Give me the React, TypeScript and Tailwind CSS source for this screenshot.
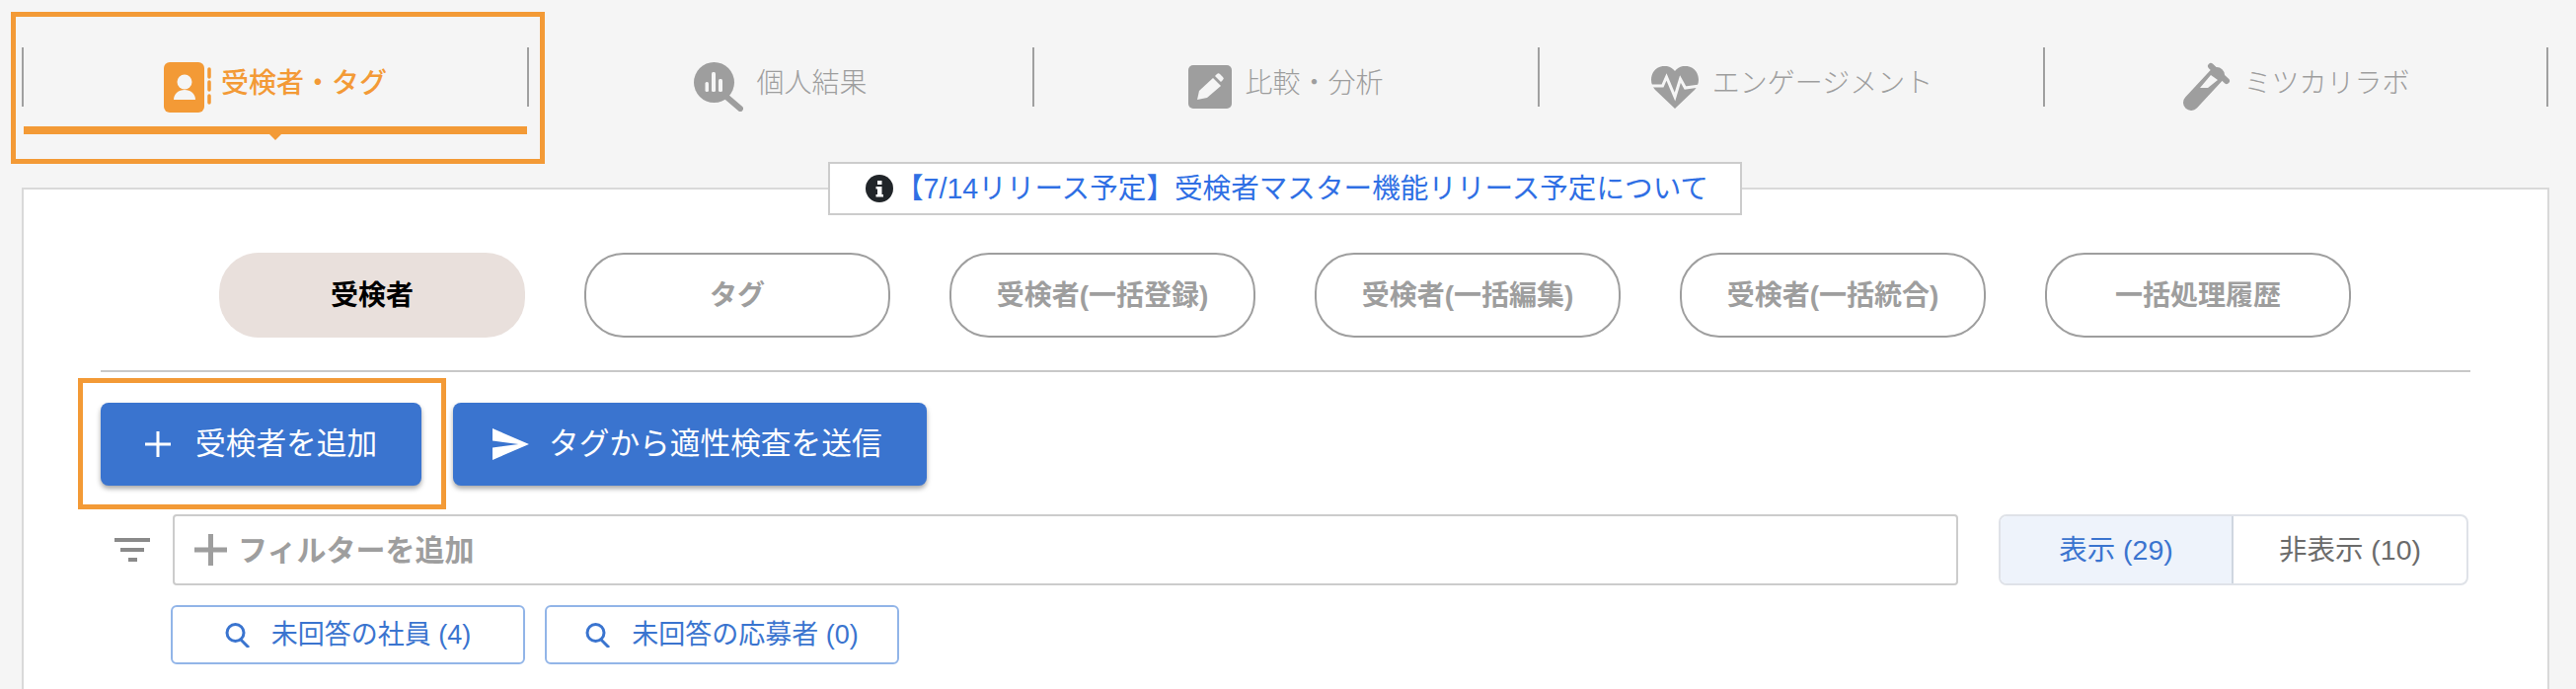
const ActiveIcon = () => (
  <svg width="48" height="51" viewBox="0 0 48 51" className="shrink-0">
    <rect x="0" y="0" width="41" height="51" rx="6" fill="#f39a36" />
    <circle cx="21" cy="20" r="7.5" fill="#f5f5f5" />
    <path d="M10 38c0-6 5-10 11-10s11 4 11 10z" fill="#f5f5f5" />
    <path d="M46 7v8M46 20v8M46 34v7" stroke="#f39a36" strokeWidth="3.5" strokeLinecap="round" />
  </svg>
);

const ResultIcon = () => (
  <svg width="50" height="50" viewBox="0 0 50 50" className="shrink-0">
    <circle cx="20.5" cy="20.5" r="20.5" fill="#9e9e9e" />
    <path d="M33 35l14 12" stroke="#9e9e9e" strokeWidth="6" strokeLinecap="round" />
    <rect x="11.5" y="20" width="3.5" height="10" rx="1.5" fill="#f5f5f5" />
    <rect x="18" y="10" width="4" height="20" rx="1.5" fill="#f5f5f5" />
    <rect x="25" y="17" width="4" height="13" rx="1.5" fill="#f5f5f5" />
  </svg>
);

const CompareIcon = () => (
  <svg width="44" height="44" viewBox="0 0 44 44" className="shrink-0">
    <rect width="44" height="44" rx="5" fill="#9e9e9e" />
    <path d="M9 35l2-9 14-13 8 8-14 12z" fill="#f5f5f5" />
    <path d="M27 11l2-2a2 2 0 0 1 3 0l3 3a2 2 0 0 1 0 3l-2 2z" fill="#f5f5f5" />
  </svg>
);

const HeartIcon = () => (
  <svg width="50" height="43" viewBox="0 0 50 43" className="shrink-0">
    <path d="M25 43L5 24C-2 17 0 2 12.5 0 18-1 23 2 25 5c2-3 7-6 12.5-5C50 2 52 17 45 24z" fill="#9e9e9e" />
    <path d="M0 20h12.5l4-9 8.500 20 5.500-18 5 9 14.500-2" fill="none" stroke="#f5f5f5" strokeWidth="3" />
  </svg>
);

const LabIcon = () => (
  <svg width="50" height="51" viewBox="0 0 50 51" className="shrink-0">
    <path d="M10 41l26-28" stroke="#9e9e9e" strokeWidth="16" strokeLinecap="round" />
    <path d="M30 4l16 15" stroke="#9e9e9e" strokeWidth="6" strokeLinecap="round" />
    <path d="M19 26l11-13 7 5-10 8z" fill="#f5f5f5" />
  </svg>
);

const InfoIcon = () => (
  <svg width="28" height="28" viewBox="0 0 28 28" className="shrink-0">
    <circle cx="14" cy="14" r="14" fill="#212529" />
    <rect x="12" y="6" width="4.500" height="4" fill="#fff" />
    <path d="M10.500 12h6v8h1.500v2.500h-7.500V20h1.500v-5.500h-1.500z" fill="#fff" />
  </svg>
);

const SearchIcon = () => (
  <svg width="26" height="25" viewBox="0 0 26 25" className="shrink-0" fill="none" stroke="#3a74cf" strokeWidth="3">
    <circle cx="10.500" cy="10" r="8.500" />
    <path d="M16 17l8 8" />
  </svg>
);

const tabs = [
  { label: '受検者・タグ', icon: <ActiveIcon />, active: true },
  { label: '個人結果', icon: <ResultIcon />, active: false },
  { label: '比較・分析', icon: <CompareIcon />, active: false },
  { label: 'エンゲージメント', icon: <HeartIcon />, active: false },
  { label: 'ミツカリラボ', icon: <LabIcon />, active: false },
];

const pills = ['受検者', 'タグ', '受検者(一括登録)', '受検者(一括編集)', '受検者(一括統合)', '一括処理履歴'];

export default function App() {
  return (
    <div className="relative h-[698px] w-[2610px] overflow-hidden bg-[#f5f5f5] font-['Liberation_Sans','Noto_Sans_CJK_JP',sans-serif]">
      {/* Tabs */}
      <div className="ml-[22px] grid w-[2560px] grid-cols-5 pt-[48px]">
        {tabs.map((tab, i) => (
          <div key={tab.label} className="flex flex-col">
            <div className={`flex h-[60px] items-center justify-center border-l-2 border-[#a0a0a0] pt-[20px] ${tab.active ? 'gap-[10px]' : 'gap-[13px]'} ${i === 4 ? 'border-r-2' : ''}`}>
              {tab.icon}
              <span className={`mb-[6px] whitespace-nowrap text-[28px] ${tab.active ? 'font-medium text-[#f39a36]' : 'font-light text-[#9e9e9e]'}`}>
                {tab.label}
              </span>
            </div>
            <div className="relative mt-[20px] ml-[2px] h-[8px]">
              {tab.active && (
                <>
                  <div className="h-full bg-[#f39a36]" />
                  <div className="absolute left-1/2 top-full h-0 w-0 -translate-x-1/2 border-x-[6px] border-t-[6px] border-x-transparent border-t-[#f39a36]" />
                </>
              )}
            </div>
          </div>
        ))}
      </div>

      {/* Highlight around the active tab */}
      <div className="absolute left-[11px] top-[12px] h-[154px] w-[541px] border-[5px] border-[#f39a36]" />

      {/* Card */}
      <div className="relative ml-[22px] mt-[54px] h-[540px] w-[2561px] border-2 border-[#d9d9d9] bg-white px-[78px] pt-[64px]">
        <div className="absolute -top-[28px] left-[815px] flex h-[54px] w-[926px] items-center border-2 border-[#cccccc] bg-white pl-[36px]">
          <InfoIcon />
          <span className="ml-[2px] whitespace-nowrap text-[28.600px] text-[#2f6fe4]">【7/14リリース予定】受検者マスター機能リリース予定について</span>
        </div>

        {/* Sub tabs */}
        <div className="flex gap-[60px] pl-[120px]">
          {pills.map((pill, i) => (
            <div
              key={pill}
              className={`flex h-[86px] w-[310px] items-center justify-center rounded-[40px] pt-[2px] text-[28px] font-bold ${
                i === 0 ? 'bg-[#e9e0dc] text-black' : 'border-2 border-[#9e9e9e] text-[#9e9e9e]'
              }`}
            >
              {pill}
            </div>
          ))}
        </div>

        <div className="mt-[33px] h-[2px] bg-[#c8c8c8]" />

        {/* Actions */}
        <div className="mt-[31px] flex gap-[32px]">
          <div className="relative">
            <div className="flex h-[84px] w-[325px] items-center rounded-[8px] bg-[#3a74cf] pl-[45px] text-[30.700px] text-white shadow-[0_3px_5px_rgba(0,0,0,0.35)]">
              <svg width="26" height="26" viewBox="0 0 26 26" className="shrink-0" stroke="#fff" strokeWidth="3">
                <path d="M13 0v26M0 13h26" />
              </svg>
              <span className="ml-[25px] whitespace-nowrap">受検者を追加</span>
            </div>
            <div className="absolute -left-[23px] -top-[25px] h-[133px] w-[373px] border-[5px] border-[#f39a36]" />
          </div>
          <div className="flex h-[84px] w-[480px] items-center rounded-[8px] bg-[#3a74cf] pl-[40px] text-[30.700px] text-white shadow-[0_3px_5px_rgba(0,0,0,0.35)]">
            <svg width="37" height="32" viewBox="2 3 21 18" className="shrink-0" fill="#fff" preserveAspectRatio="none">
              <path d="M2.010 21L23 12 2.010 3 2 10l15 2-15 2z" />
            </svg>
            <span className="ml-[20px] whitespace-nowrap">タグから適性検査を送信</span>
          </div>
        </div>

        {/* Filter */}
        <div className="mt-[29px] flex items-center">
          <svg width="36" height="24" viewBox="0 0 36 24" className="ml-[14px] shrink-0" fill="#8a8a8a">
            <rect width="36" height="4" />
            <rect x="6" y="10" width="24" height="4" />
            <rect x="14" y="20" width="9" height="4" />
          </svg>
          <div className="ml-[23px] flex h-[72px] w-[1809px] items-center rounded-[4px] border-2 border-[#cccccc] pl-[20px]">
            <svg width="33" height="32" viewBox="0 0 33 32" className="shrink-0" stroke="#9e9e9e" strokeWidth="5">
              <path d="M16.500 0v32M0 16h33" />
            </svg>
            <span className="ml-[11px] whitespace-nowrap text-[30px] font-semibold text-[#9e9e9e]">フィルターを追加</span>
          </div>
          <div className="ml-[41px] flex h-[72px] w-[476px] rounded-[8px] border-2 border-[#dfe2e8] text-[28.500px]">
            <div className="flex w-[236px] items-center justify-center rounded-l-[6px] border-r-2 border-[#cfd6e0] bg-[#eef3fb] text-[#3a74cf]">表示 (29)</div>
            <div className="flex flex-1 items-center justify-center text-[#6b6b6b]">非表示 (10)</div>
          </div>
        </div>

        {/* Saved filters */}
        <div className="ml-[71px] mt-[20px] flex gap-[20px]">
          {['未回答の社員 (4)', '未回答の応募者 (0)'].map((chip) => (
            <div key={chip} className="flex h-[60px] w-[359px] items-center justify-center gap-[21px] rounded-[6px] border-2 border-[#92b5e8] text-[27px] text-[#3a74cf]">
              <SearchIcon />
              <span className="whitespace-nowrap">{chip}</span>
            </div>
          ))}
        </div>
      </div>
    </div>
  );
}
